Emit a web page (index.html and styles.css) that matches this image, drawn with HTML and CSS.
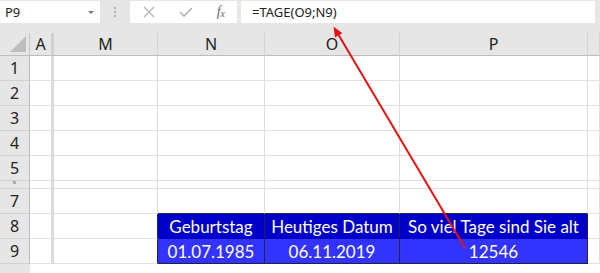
FILE: index.html
```html
<!DOCTYPE html>
<html lang="de">
<head>
  <meta charset="UTF-8">
  <title>TAGE Funktion</title>
  <link rel="stylesheet" href="styles.css">
</head>
<body>
  <!-- Formula bar -->
  <div class="formula-bar">
    <div class="name-box">
      <span>P9</span>
      <span class="caret"></span>
    </div>
    <div class="grip"><i></i><i></i><i></i></div>
    <div class="fx-box">
      <svg class="icon" width="14" height="14" viewBox="0 0 14 14"><path d="M2 2 L12 12 M12 2 L2 12" stroke="#b4b4b4" stroke-width="1.3" fill="none"/></svg>
      <svg class="icon" width="16" height="14" viewBox="0 0 16 14"><path d="M2 7 L6 11 L14 3" stroke="#b4b4b4" stroke-width="1.6" fill="none"/></svg>
      <span class="fx">f<sub>x</sub></span>
    </div>
    <div class="formula-input">=TAGE(O9;N9)</div>
  </div>

  <!-- Sheet -->
  <div class="sheet">
    <div class="corner"><span class="tri"></span></div>
    <div class="col-head">A</div>
    <div class="col-head hidden-left">M</div>
    <div class="col-head">N</div>
    <div class="col-head">O</div>
    <div class="col-head">P</div>
    <div class="col-head"></div>

    <div class="row-head">1</div><div class="cell"></div><div class="cell hidden-left"></div><div class="cell"></div><div class="cell"></div><div class="cell"></div><div class="cell"></div>
    <div class="row-head">2</div><div class="cell"></div><div class="cell hidden-left"></div><div class="cell"></div><div class="cell"></div><div class="cell"></div><div class="cell"></div>
    <div class="row-head">3</div><div class="cell"></div><div class="cell hidden-left"></div><div class="cell"></div><div class="cell"></div><div class="cell"></div><div class="cell"></div>
    <div class="row-head">4</div><div class="cell"></div><div class="cell hidden-left"></div><div class="cell"></div><div class="cell"></div><div class="cell"></div><div class="cell"></div>
    <div class="row-head">5</div><div class="cell"></div><div class="cell hidden-left"></div><div class="cell"></div><div class="cell"></div><div class="cell"></div><div class="cell"></div>
    <div class="row-head squeezed"><span>6</span></div><div class="cell"></div><div class="cell hidden-left"></div><div class="cell"></div><div class="cell"></div><div class="cell"></div><div class="cell"></div>
    <div class="row-head">7</div><div class="cell"></div><div class="cell hidden-left"></div><div class="cell above-table"></div><div class="cell above-table"></div><div class="cell above-table"></div><div class="cell"></div>

    <div class="row-head">8</div><div class="cell"></div><div class="cell hidden-left before-table"></div>
    <div class="cell tbl-head">Geburtstag</div>
    <div class="cell tbl-head">Heutiges Datum</div>
    <div class="cell tbl-head">So viel Tage sind Sie alt</div>
    <div class="cell"></div>

    <div class="row-head">9</div><div class="cell"></div><div class="cell hidden-left before-table"></div>
    <div class="cell tbl-data">01.07.1985</div>
    <div class="cell tbl-data">06.11.2019</div>
    <div class="cell tbl-data">12546</div>
    <div class="cell"></div>
  </div>

  <!-- Red annotation arrow -->
  <svg class="arrow" width="600" height="273" viewBox="0 0 600 273">
    <line x1="465" y1="248" x2="338.6" y2="35.1" stroke="#e31212" stroke-width="2"/>
    <polygon points="333.5,26.5 342.3,33.3 335.0,37.5" fill="#e31212"/>
  </svg>
</body>
</html>
```

FILE: styles.css
```css
/* Global */
body {
  margin: 0;
  width: 600px;
  height: 273px;
  overflow: hidden;
  position: relative;
  background: #e6e6e6;
  font-family: 'Noto Sans', 'Open Sans', sans-serif;
  color: #222;
}
/* Formula bar */
.formula-bar {
  display: flex;
  align-items: stretch;
  height: 22px;
  padding-top: 1px;
}
.name-box {
  width: 100px;
  box-sizing: border-box;
  background: #fff;
  display: flex;
  align-items: center;
  justify-content: space-between;
  padding: 0 6px 0 5px;
  font-size: 13px;
}
.caret {
  width: 0;
  height: 0;
  border-left: 3px solid transparent;
  border-right: 3px solid transparent;
  border-top: 3px solid #777;
}
.grip {
  width: 30px;
  display: flex;
  flex-direction: column;
  align-items: center;
  justify-content: center;
  gap: 2px;
}
.grip i {
  width: 2px;
  height: 2px;
  background: #b0b0b0;
}
.fx-box {
  width: 107px;
  background: #fff;
  display: flex;
  align-items: center;
  justify-content: space-between;
  padding: 0 12px 0 12px;
  box-sizing: border-box;
}
.fx {
  font-family: 'Liberation Serif', serif;
  font-style: italic;
  font-size: 14px;
  color: #6b6b6b;
}
.fx sub {
  font-size: 10px;
  vertical-align: -1px;
}
.formula-input {
  margin-left: 4px;
  width: 354px;
  background: #fff;
  display: flex;
  align-items: center;
  padding-left: 11px;
  box-sizing: border-box;
  font-size: 13px;
}
/* Sheet grid */
.sheet {
  margin-top: 10px;
  display: grid;
  grid-template-columns: 30px 22px 106px 107px 135px 188px 12px;
  grid-template-rows: 23px 25px 25px 25px 25px 25px 8px 25px 25px 25px 9px;
}
.sheet > div {
  box-sizing: border-box;
  overflow: hidden;
}
.sheet::after {
  content: "";
  grid-column: 1 / -1;
  background: linear-gradient(to right, #e6e6e6 30px, #fff 30px);
}
.corner {
  background: #e6e6e6;
  border-right: 1px solid #c6c6c6;
  border-bottom: 1px solid #bcbcbc;
  position: relative;
}
.tri {
  position: absolute;
  right: 3px;
  bottom: 3px;
  width: 0;
  height: 0;
  border-left: 16px solid transparent;
  border-bottom: 16px solid #bdbdbd;
}
.col-head {
  background: #e6e6e6;
  border-right: 1px solid #d2d2d2;
  border-bottom: 1px solid #bcbcbc;
  text-align: center;
  font-size: 16px;
  line-height: 23px;
}
.row-head {
  background: #e6e6e6;
  border-right: 1px solid #bcbcbc;
  border-bottom: 1px solid #d0d0d0;
  text-align: center;
  font-size: 16px;
  line-height: 25px;
}
.row-head.squeezed span {
  display: block;
  font-size: 6px;
  line-height: 8px;
  margin-top: -3px;
  color: #555;
}
.cell {
  background: #fff;
  border-right: 1px solid #dedede;
  border-bottom: 1px solid #e2e2e2;
}
.hidden-left {
  border-left: 2px solid #dadada;
}
.col-head.hidden-left {
  border-left: 2px solid #cfcfcf;
}
/* Colored table */
.above-table {
  border-bottom-color: #20204a;
}
.before-table {
  border-right-color: #20204a;
}
.tbl-head,
.tbl-data {
  color: #fff;
  font-family: 'Lato', 'Liberation Sans', sans-serif;
  font-size: 17px;
  text-align: center;
  line-height: 25px;
  border-right-color: #20204a;
  white-space: nowrap;
}
.tbl-head {
  background: #0000c8;
  border-bottom-color: #0000c8;
}
.tbl-data {
  background: #3333ff;
  border-bottom-color: #20204a;
}
/* Annotation */
.arrow {
  position: absolute;
  left: 0;
  top: 0;
  pointer-events: none;
}
```
